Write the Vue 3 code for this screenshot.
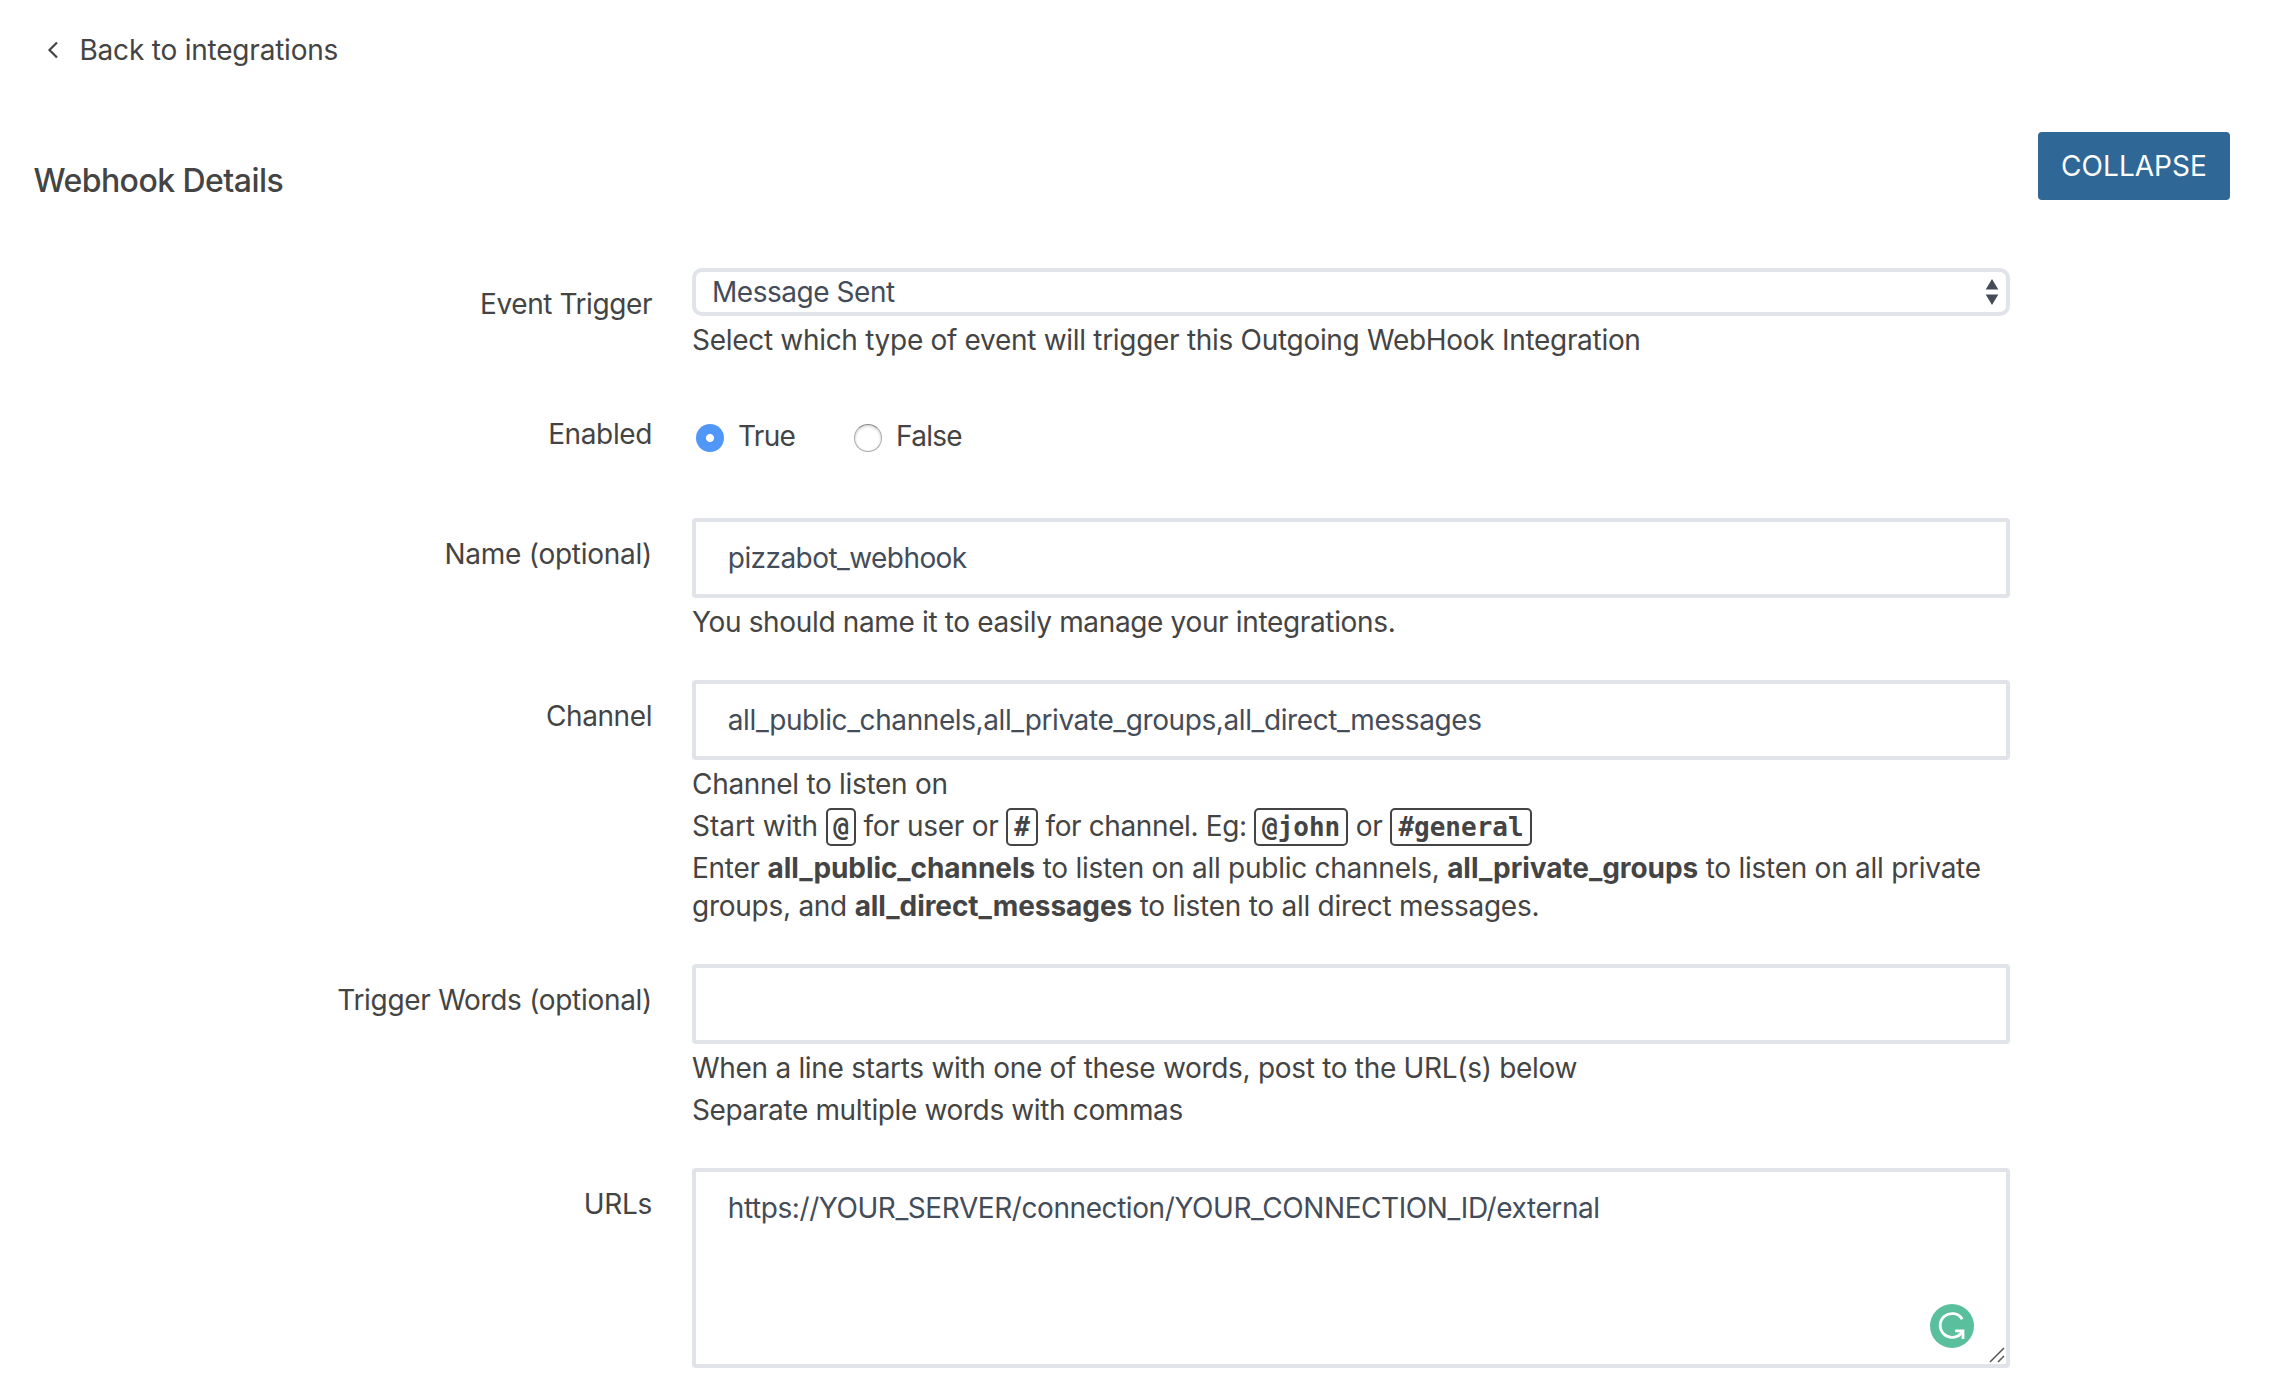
<script setup>
import { ref } from 'vue'

const enabled = ref('true')
const name = ref('pizzabot_webhook')
const channel = ref('all_public_channels,all_private_groups,all_direct_messages')
const words = ref('')
const urls = ref('https://YOUR_SERVER/connection/YOUR_CONNECTION_ID/external')
</script>

<template>
  <main class="page">
    <nav class="back">
      <svg class="chevron" width="14" height="20" viewBox="0 0 14 20">
        <path d="M11 2.5 3.5 10 11 17.5" fill="none" stroke="#444" stroke-width="2.2" />
      </svg>
      <a class="back-link">Back to integrations</a>
    </nav>

    <header class="section-head">
      <h1>Webhook Details</h1>
      <button class="collapse" type="button">COLLAPSE</button>
    </header>

    <form class="form">
      <div class="row">
        <label class="label event-label">Event Trigger</label>
        <div class="control">
          <div class="select-wrap">
            <select class="select">
              <option>Message Sent</option>
            </select>
            <svg class="arrows" width="14" height="26" viewBox="0 0 14 26">
              <path d="M7 0 13.3 10.5H.7ZM.7 15.5H13.3L7 26Z" fill="#444c59" />
            </svg>
          </div>
          <p class="help">Select which type of event will trigger this Outgoing WebHook Integration</p>
        </div>
      </div>

      <div class="row enabled-row">
        <label class="label enabled-label">Enabled</label>
        <div class="control radios">
          <label class="radio"><input v-model="enabled" type="radio" value="true" /><span>True</span></label>
          <label class="radio"><input v-model="enabled" type="radio" value="false" /><span>False</span></label>
        </div>
      </div>

      <div class="row">
        <label class="label name-label">Name (optional)</label>
        <div class="control">
          <input v-model="name" class="field name-field" type="text" />
          <p class="help name-help">You should name it to easily manage your integrations.</p>
        </div>
      </div>

      <div class="row">
        <label class="label channel-label">Channel</label>
        <div class="control">
          <input v-model="channel" class="field" type="text" />
          <p class="help">Channel to listen on</p>
          <p class="help start"><span class="lead">Start with </span><code class="at">@</code> for user or <code class="hash">#</code><span class="eg"> for channel. Eg: </span><code class="john">@john</code> or <code class="general">#general</code></p>
          <p class="help enter">
            <span class="line">Enter <strong>all_public_channels</strong> to listen on all public channels, <strong>all_private_groups</strong> to listen on all private</span>
            <span class="line">groups, and <strong>all_direct_messages</strong> to listen to all direct messages.</span>
          </p>
        </div>
      </div>

      <div class="row">
        <label class="label">Trigger Words (optional)</label>
        <div class="control">
          <input v-model="words" class="field" type="text" />
          <p class="help">When a line starts with one of these words, post to the URL(s) below</p>
          <p class="help separate">Separate multiple words with commas</p>
        </div>
      </div>

      <div class="row">
        <label class="label">URLs</label>
        <div class="control area-wrap">
          <textarea v-model="urls" class="field area" spellcheck="false"></textarea>
          <svg class="grammar" width="44" height="44" viewBox="0 0 44 44">
            <circle cx="22" cy="22" r="22" fill="#59bf9d" />
            <path d="M32.2 15.2A11.9 11.9 0 1 0 31.6 28.6" fill="none" stroke="#fff" stroke-width="2.8" />
            <path d="M25.2 26.8H33V35" fill="none" stroke="#fff" stroke-width="2.8" />
            <path d="M27.5 32.5 33 27" fill="none" stroke="#fff" stroke-width="2.4" />
          </svg>
          <svg class="grip" width="16" height="16" viewBox="0 0 16 16">
            <path d="M1 15 15 1M9 15 15 9" fill="none" stroke="#555" stroke-width="1.5" />
          </svg>
        </div>
      </div>
    </form>
  </main>
</template>

<style>
body {
  background: #fff;
  overflow: hidden;
}
</style>

<style scoped>
.page {
  box-sizing: border-box;
  width: 2292px;
  height: 1380px;
  overflow: hidden;
  padding-top: 31px;
  color: #444;
  background: #fff;
  font: 400 28px/38px Inter, "Liberation Sans", sans-serif;
  letter-spacing: -0.3px;
}
.back {
  display: flex;
  align-items: center;
  height: 38px;
  padding-left: 46px;
}
.chevron {
  margin-right: 19.5px;
}
.back-link {
  letter-spacing: -0.21px;
}
.section-head {
  display: flex;
  justify-content: space-between;
  align-items: flex-start;
  height: 68px;
  margin-top: 63px;
  padding: 0 62px 0 33.5px;
}
h1 {
  margin: 29px 0 0;
  font-size: 32px;
  font-weight: 500;
  line-height: 40px;
  letter-spacing: -0.55px;
}
.collapse {
  box-sizing: border-box;
  width: 192px;
  height: 68px;
  padding: 0;
  border: 0;
  border-radius: 4px;
  background: #2f6796;
  color: #fff;
  font: inherit;
  letter-spacing: 0.04px;
}
.form {
  margin-top: 68px;
}
.row {
  display: grid;
  grid-template-columns: 652px 1318px;
  column-gap: 40px;
  margin-bottom: 39px;
}
.label {
  padding-top: 17px;
  text-align: right;
}
.event-label {
  letter-spacing: -0.42px;
}
.enabled-label {
  letter-spacing: -0.38px;
}
.channel-label {
  letter-spacing: -0.42px;
}
.name-label {
  letter-spacing: -0.26px;
}
.select-wrap {
  position: relative;
  height: 48px;
}
.select {
  box-sizing: border-box;
  display: block;
  width: 100%;
  height: 48px;
  padding: 0 16px;
  border: 4px solid #e0e4e8;
  border-radius: 10px;
  appearance: none;
  background: #fff;
  color: #444c59;
  font: inherit;
  letter-spacing: -0.46px;
}
.arrows {
  position: absolute;
  top: 11px;
  right: 11.5px;
}
.help {
  margin: 4px 0 0;
}
.select-wrap + .help,
.field + .help {
  margin-top: 5px;
}
.name-help {
  letter-spacing: -0.35px;
}
.separate {
  letter-spacing: -0.37px;
}
.enabled-row {
  height: 81px;
}
.radios {
  display: flex;
  align-items: flex-start;
  padding-top: 19px;
}
.radio {
  display: flex;
  align-items: center;
  width: 158px;
  height: 38px;
  letter-spacing: -0.7px;
}
.radio input {
  box-sizing: border-box;
  width: 28px;
  height: 28px;
  margin: 4px 14px 0 4px;
  border: 1.5px solid #aaa;
  border-top-color: #8c8c8c;
  border-radius: 50%;
  appearance: none;
  background: #fff;
  box-shadow: inset 0 1px 3px #ccc;
}
.radio input:checked {
  border: 0;
  background: radial-gradient(circle, #fff 3.6px, #5097f7 4.4px);
  box-shadow: none;
}
.field {
  box-sizing: border-box;
  display: block;
  width: 100%;
  height: 80px;
  margin: 0;
  padding: 0 31.8px;
  border: 4px solid #e0e4e8;
  border-radius: 4px;
  outline: 0;
  background: #fff;
  color: #444c59;
  font: inherit;
  letter-spacing: -0.4px;
}
.name-field {
  letter-spacing: -0.56px;
}
.start {
  height: 38px;
  white-space: nowrap;
}
.lead {
  letter-spacing: -0.03px;
}
.eg {
  letter-spacing: -0.38px;
}
code {
  box-sizing: border-box;
  display: inline-block;
  height: 38px;
  margin: 1px 0 -1px;
  border: 2px solid #444;
  border-radius: 5px;
  vertical-align: top;
  text-align: center;
  font: 700 26px/34px "DejaVu Sans Mono", monospace;
  letter-spacing: 0;
}
.at {
  width: 30px;
}
.hash {
  width: 32px;
}
.john {
  width: 94px;
}
.general {
  width: 142px;
}
.line {
  display: block;
  white-space: nowrap;
  letter-spacing: -0.26px;
}
strong {
  font-weight: 700;
  letter-spacing: -0.07px;
}
.area-wrap {
  position: relative;
}
.area {
  height: 200px;
  padding-top: 17px;
  resize: none;
  letter-spacing: -0.42px;
}
.grammar {
  position: absolute;
  top: 136px;
  right: 36px;
}
.grip {
  position: absolute;
  top: 179px;
  right: 5px;
}
</style>
